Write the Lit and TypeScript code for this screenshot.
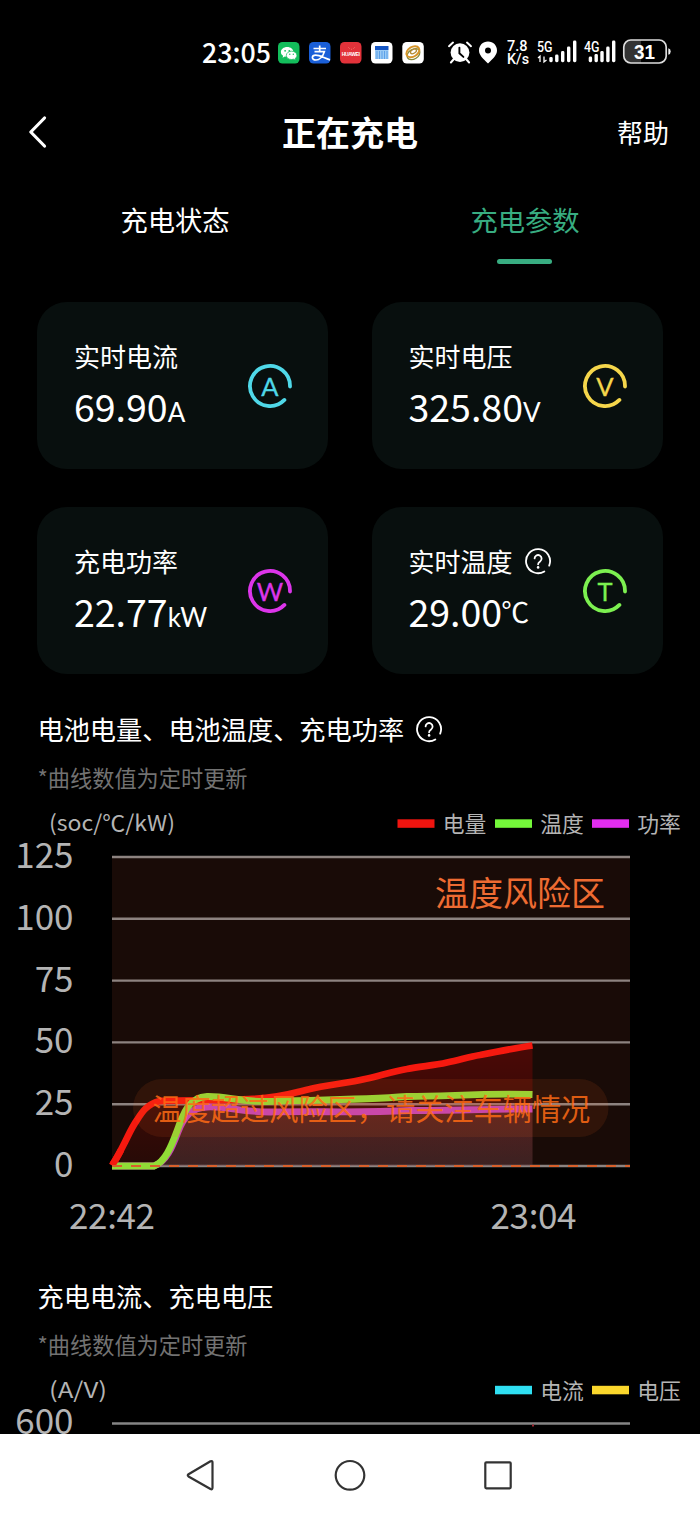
import { LitElement, html, svg, css } from "lit";
import { customElement, property } from "lit/decorators.js";

interface Legend { color: string; name: string; x: number; }

const LINES_Y = [857, 918.8, 980.6, 1042.4, 1104.2, 1166];
const TICKS = ["125", "100", "75", "50", "25", "0"];

const RED = "M113,1164 C117,1158 121,1150 125,1142 C129,1134 132,1127 137,1120 C142,1112 147,1104 160,1101 C185,1100 225,1101 253,1099 C284,1097 296,1092 310,1089 C325,1085 350,1083 365,1079 C380,1076 390,1072 407,1069 C420,1066 432,1066 447,1062.5 C460,1060 468,1057 480,1055 C500,1051 515,1048 532.5,1045.5";
const GREEN = "M112,1166 L154,1166 C165,1162 171,1147 177,1131 C183,1114 189,1097 207,1096.5 C226,1096 240,1102 267,1101.5 C310,1100 360,1100 407,1096.5 C450,1096.5 480,1093 532.5,1094.5";
const PURPLE = "M112,1166 L154,1166 C166,1162 172,1148 178,1132 C184,1116 192,1107.5 207,1107 C228,1106 240,1112 270,1112 C320,1111 360,1113 410,1110.5 C450,1110.5 490,1109 532.5,1109";

@customElement("ring-icon")
class RingIcon extends LitElement {
  @property() letter = "A";
  @property() color = "#fff";
  static styles = css`
    :host { display: block; width: 46px; height: 46px; }
    svg { display: block; }
    text { font: 400 25.500px Lato, sans-serif; text-anchor: middle; }
  `;
  render() {
    return html`<svg width="46" height="46" viewBox="0 0 46 46">
      <path d="M43 23.5A20 20 0 1 0 37.4 36.9" fill="none" stroke=${this.color} stroke-width="3.8" stroke-linecap="round"/>
      <text x="23" y="32.500" fill=${this.color} stroke=${this.color} stroke-width=".3">${this.letter}</text>
    </svg>`;
  }
}

@customElement("help-icon")
class HelpIcon extends LitElement {
  static styles = css`
    :host { display: block; width: 28px; height: 28px; }
    svg { display: block; }
  `;
  render() {
    return html`<svg width="28" height="28" viewBox="0 0 28 28" fill="none" stroke="#fff" stroke-width="1.8" stroke-linecap="round">
      <path d="M20.3 24.4A12 12 0 1 1 25.2 18.6"/>
      <path d="M10.6 11.4a3.5 3.5 0 1 1 5.5 3c-1.5 1-2 1.5-2 2.9"/>
      <circle cx="14.1" cy="20.4" r="1.3" fill="#fff" stroke="none"/>
    </svg>`;
  }
}

@customElement("status-bar")
class StatusBar extends LitElement {
  static styles = css`
    :host { display: block; height: 83px; }
    svg { display: block; }
    text { font-family: Roboto, sans-serif; fill: #fff; }
    .time { font: 500 27.500px "Noto Sans CJK SC", sans-serif; }
    .small { font-size: 14.500px; font-weight: 500; }
    .net { font-size: 14px; font-weight: 500; }
    .battery { font: 700 20px "Liberation Sans", sans-serif; }
    .brand { font: 700 5px "Liberation Sans", sans-serif; }
  `;
  render() {
    const bars = (xs: number[], tops: number[]) =>
      xs.map((x, i) => svg`<rect x=${x} y=${tops[i]} width="3.4" height=${62.2 - tops[i]} rx="1.4" fill="#fff"/>`);
    return html`<svg width="700" height="83" viewBox="0 0 700 83">
      <text class="time" x="202" y="62.5" textLength="69" lengthAdjust="spacingAndGlyphs">23:05</text>
      <rect x="278" y="42" width="21.500" height="21.500" rx="4.500" fill="#13bd5b"/>
      <path d="M287.200 47c-3.600 0-6.300 2.200-6.300 5 0 1.600.8 2.900 2.200 3.800l-.5 1.900 2.200-1.200 2.400.3c3.500 0 6.200-2.200 6.200-4.900s-2.700-4.900-6.200-4.900z" fill="#fff"/>
      <path d="M291.600 51.200c3 0 5.300 1.900 5.300 4.200 0 1.300-.7 2.400-1.800 3.200l.4 1.600-1.900-1-2 .3c-3 0-5.300-1.800-5.300-4.100s2.300-4.200 5.300-4.200z" fill="#fff" stroke="#13bd5b" stroke-width=".7"/>
      <g fill="#13bd5b"><circle cx="285.100" cy="50.800" r=".9"/><circle cx="289.300" cy="50.800" r=".9"/><circle cx="289.800" cy="54.200" r=".7"/><circle cx="293.300" cy="54.200" r=".7"/></g>
      <rect x="309" y="42" width="21.500" height="21.500" rx="4.500" fill="#1a5fd8"/>
      <path d="M313.500 48.500h12.500M319.700 45.500v6M314.500 51.700h9.800c-1.500 5-5 8.300-8.300 8.300-5 0-4.500-4.800-.3-4.800 4 0 8.300 2.800 14.300 4.700" fill="none" stroke="#fff" stroke-width="1.700"/>
      <rect x="340" y="42" width="21.500" height="21.500" rx="4.500" fill="#e2323a"/>
      <text class="brand" x="341.800" y="55.800" textLength="18">HUAWEI</text>
      <path d="M348.500 47.500l1 1M351.500 48.800v.8M354.500 47.500l-1 1" stroke="#ff9a80" stroke-width=".8"/>
      <rect x="371" y="42" width="21.500" height="21.500" rx="4.500" fill="#fff"/>
      <path d="M375 46h13.500v4H375z" fill="#1556c4"/>
      <path d="M375 50h13.500v9H375z" fill="#9bcbf5"/>
      <path d="M377 51v8M379.500 51v8M382 51v8M384.500 51v8M387 51v8" stroke="#4a95e6" stroke-width=".8"/>
      <rect x="402.300" y="42" width="21.500" height="21.500" rx="4.500" fill="#fff"/>
      <g fill="none" transform="rotate(-32 413 52.500)">
        <ellipse cx="412.500" cy="54.200" rx="7" ry="4.800" stroke="#858b3d" stroke-width="1.300"/>
        <ellipse cx="413.300" cy="51.800" rx="7" ry="4.800" stroke="#d79529" stroke-width="1.900"/>
        <ellipse cx="414" cy="51.800" rx="3.300" ry="1.900" stroke="#b28b35" stroke-width="1.300"/>
      </g>
      <g stroke="#fff" fill="none" stroke-linecap="round">
        <circle cx="460" cy="52.600" r="9.400" fill="#fff" stroke="none"/>
        <path d="M449 46.200l4-3.600M471 46.200l-4-3.600M453.500 59.500l-2.600 3M466.500 59.500l2.600 3" stroke-width="2"/>
        <path d="M459.400 47.600v5.700l4 3.600" stroke="#000" stroke-width="1.900"/>
      </g>
      <path fill-rule="evenodd" d="M488 41.500c-5.300 0-9 3.900-9 8.900 0 4.600 4 8.200 9 13 5-4.800 9-8.400 9-13 0-5-3.700-8.900-9-8.900zm0 6a3 3 0 1 1 0 6 3 3 0 0 1 0-6z" fill="#fff"/>
      <text class="small" x="507" y="50.500" textLength="20.500" lengthAdjust="spacingAndGlyphs">7.8</text>
      <text class="small" x="507" y="64" textLength="22" lengthAdjust="spacingAndGlyphs">K/s</text>
      <text class="net" x="537" y="51.500" textLength="15.500" lengthAdjust="spacingAndGlyphs">5G</text>
      <path d="M538 58l2-1.800V62M544 56.500V62l2.500-2" stroke="#fff" stroke-width="1.300" fill="none"/>
      ${bars([549.3, 555.1, 561, 567, 573], [57, 54.5, 51, 46.5, 40.5])}
      <text class="net" x="584" y="51.500" textLength="15.500" lengthAdjust="spacingAndGlyphs">4G</text>
      ${bars([588.7, 594.5, 600.3, 606.2, 612], [56.5, 54, 51, 46.5, 40.5])}
      <path d="M631 40h10v23h-10q-6.500 0-6.500-6.500v-10Q624.500 40 631 40z" fill="#333"/>
      <rect x="623.800" y="40" width="42.400" height="23" rx="7" fill="none" stroke="#ddd" stroke-width="1.700"/>
      <path d="M668.300 48.300q2.400.6 2.400 3.200t-2.400 3.200z" fill="#eee"/>
      <text class="battery" x="634" y="58.700" textLength="21" lengthAdjust="spacingAndGlyphs">31</text>
    </svg>`;
  }
}

@customElement("metric-card")
class MetricCard extends LitElement {
  @property() label = "";
  @property() value = "";
  @property() unit = "";
  @property() letter = "";
  @property() color = "";
  @property({ type: Boolean }) help = false;
  static styles = css`
    :host { display: flex; box-sizing: border-box; height: 167px; border-radius: 30px; background: #080f0e; padding: 0 35px 0 37px; justify-content: space-between; color: #fff; }
    .info { padding-top: 35px; }
    .label { display: flex; align-items: center; gap: 11px; height: 38px; font-size: 26px; line-height: 38px; white-space: nowrap; }
    .value { display: flex; align-items: baseline; height: 54px; line-height: 54px; margin-top: 4px; white-space: nowrap; }
    .number { font-size: 37.500px; }
    .unit { font: 400 26px/54px Lato, sans-serif; }
    .degree { font-family: "Noto Sans CJK SC", sans-serif; font-size: 28px; margin-left: -1px; position: relative; top: -4px; }
    ring-icon { margin-top: 61px; flex: none; }
  `;
  render() {
    return html`<div class="info">
        <div class="label"><span>${this.label}</span>${this.help ? html`<help-icon></help-icon>` : ""}</div>
        <div class="value"><span class="number">${this.value}</span><span class="unit ${this.unit === "℃" ? "degree" : ""}">${this.unit}</span></div>
      </div>
      <ring-icon .letter=${this.letter} .color=${this.color}></ring-icon>`;
  }
}

const legendItems = (items: Legend[], y: number) => items.map(l => svg`
  <rect x=${l.x} y=${y - 4.7} width="37" height="8.500" fill=${l.color}/>
  <text class="legend" x=${l.x + 45.3} y=${y + 8}>${l.name}</text>`);

const chartStyles = css`
  :host { display: block; }
  svg { display: block; }
  text { font-family: "Noto Sans CJK SC", sans-serif; fill: #b4b4b4; }
  .legend { font-size: 21.8px; }
  .unit { font-size: 22px; }
  .tick { font-size: 35px; text-anchor: end; }
  .time { font-size: 35px; }
  .risk { font-size: 34px; fill: #ee6b32; }
  .warn { font-size: 29.200px; fill: #ff6a14; fill-opacity: .85; }
`;

@customElement("power-chart")
class PowerChart extends LitElement {
  static styles = chartStyles;
  render() {
    const legend = [
      { color: "#f0140f", name: "电量", x: 397.5 },
      { color: "#74f83a", name: "温度", x: 495 },
      { color: "#e22df0", name: "功率", x: 592 },
    ];
    return html`<svg width="700" height="450" viewBox="0 800 700 450">
      <defs>
        <linearGradient id="red" x1="0" y1="0" x2="0" y2="1"><stop offset="0" stop-color="#ff0000" stop-opacity=".22"/><stop offset="1" stop-color="#ff0000" stop-opacity=".06"/></linearGradient>
        <linearGradient id="violet" x1="0" y1="0" x2="0" y2="1"><stop offset="0" stop-color="#90484a" stop-opacity=".36"/><stop offset="1" stop-color="#604a50" stop-opacity=".36"/></linearGradient>
      </defs>
      <text class="unit" x="49" y="831" textLength="126" lengthAdjust="spacingAndGlyphs">(soc/℃/kW)</text>
      ${legendItems(legend, 824)}
      <rect x="112" y="857" width="518" height="310" fill="#190b07"/>
      ${LINES_Y.map(y => svg`<line x1="112" x2="630" y1=${y} y2=${y} stroke="#8d8380" stroke-width="2.400"/>`)}
      ${TICKS.map((t, i) => svg`<text class="tick" x="73.500" y=${LINES_Y[i] + 11}>${t}</text>`)}
      <path d="${RED} V1166 H112Z" fill="url(#red)"/>
      <path d="${PURPLE} V1166Z" fill="url(#violet)"/>
      <g fill="none" stroke-width="6.800">
        <path d=${RED} stroke="#f5190f"/>
        <path d=${PURPLE} stroke="#c445b8"/>
        <path d=${GREEN} stroke="#91dc36"/>
        <path d="M112 1165.500C116 1159 119 1154 121 1150" stroke="#f5190f"/>
      </g>
      <path d="M112 1166H630" stroke="#d8602b" stroke-width="1.800" stroke-dasharray="10 9"/>
      <rect x="133" y="1079" width="475.500" height="58" rx="29" fill="#ff7020" fill-opacity=".1"/>
      <text class="risk" x="435" y="905.500">温度风险区</text>
      <text class="warn" x="152.500" y="1119.500">温度超过风险区，请关注车辆情况</text>
      <text class="time" x="69" y="1228.500" textLength="86">22:42</text>
      <text class="time" x="490.500" y="1228.500" textLength="86">23:04</text>
    </svg>`;
  }
}

@customElement("current-chart")
class CurrentChart extends LitElement {
  static styles = chartStyles;
  render() {
    const legend = [
      { color: "#2fdff2", name: "电流", x: 495 },
      { color: "#fbd72c", name: "电压", x: 592 },
    ];
    return html`<svg width="700" height="70" viewBox="0 1366 700 70">
      <text class="unit" x="49" y="1397.500" textLength="58" lengthAdjust="spacingAndGlyphs">(A/V)</text>
      ${legendItems(legend, 1390.5)}
      <text class="tick" x="73.500" y="1434">600</text>
      <line x1="112" x2="630" y1="1423.500" y2="1423.500" stroke="#858585" stroke-width="2.400"/>
      <rect x="532" y="1424.500" width="2" height="2" fill="#a02530"/>
    </svg>`;
  }
}

@customElement("app-root")
class AppRoot extends LitElement {
  static styles = css`
    :host { display: flex; flex-direction: column; width: 700px; height: 1516px; overflow: hidden; background: #000; color: #fff; font-family: "Noto Sans CJK SC", sans-serif; }
    .screen { height: 1434px; overflow: hidden; flex: none; }
    .header { display: grid; grid-template-columns: 1fr auto 1fr; align-items: center; height: 98px; padding: 0 31px 0 27px; box-sizing: border-box; }
    .back { margin-left: -1px; }
    .title { font-size: 34px; font-weight: 700; line-height: 50px; padding-left: 4px; }
    .help { justify-self: end; font-size: 26px; line-height: 40px; }
    .tabs { display: grid; grid-template-columns: 1fr 1fr; height: 121px; }
    .tab { display: flex; flex-direction: column; align-items: center; padding-top: 18px; font-size: 27.300px; line-height: 40px; }
    .active { color: #38ad81; }
    .bar { width: 55px; height: 5px; border-radius: 3px; background: #38ad81; margin: 20px 2px 0 0; }
    .cards { display: grid; grid-template-columns: 291px 291px; grid-auto-rows: 167px; gap: 38px 43.500px; padding: 0 37px; height: 372px; box-sizing: border-box; }
    .section { display: flex; align-items: center; gap: 11px; height: 40px; padding-left: 37.500px; font-size: 26.200px; }
    .first { margin-top: 35px; }
    .second { margin-top: 26px; }
    .note { height: 30px; margin-top: 13px; padding-left: 37.500px; font-size: 22.200px; line-height: 30px; color: #727272; }
    power-chart { margin-top: 8px; }
    current-chart { margin-top: 7px; }
    .nav { height: 82px; flex: none; background: #fff; }
    svg { display: block; }
  `;
  render() {
    return html`
      <div class="screen">
        <status-bar></status-bar>
        <div class="header">
          <svg class="back" width="24" height="34" viewBox="0 0 24 34"><path d="M18.500 3L4.800 17l13.700 14" fill="none" stroke="#fff" stroke-width="3.200" stroke-linecap="round" stroke-linejoin="round"/></svg>
          <div class="title">正在充电</div>
          <div class="help">帮助</div>
        </div>
        <div class="tabs">
          <div class="tab">充电状态</div>
          <div class="tab active">充电参数<div class="bar"></div></div>
        </div>
        <div class="cards">
          <metric-card label="实时电流" value="69.90" unit="A" letter="A" color="#4fd8e8"></metric-card>
          <metric-card label="实时电压" value="325.80" unit="V" letter="V" color="#f5d64b"></metric-card>
          <metric-card label="充电功率" value="22.77" unit="kW" letter="W" color="#dc35ea"></metric-card>
          <metric-card label="实时温度" value="29.00" unit="℃" letter="T" color="#7cf050" help></metric-card>
        </div>
        <div class="section first">电池电量、电池温度、充电功率<help-icon></help-icon></div>
        <div class="note">*曲线数值为定时更新</div>
        <power-chart></power-chart>
        <div class="section second">充电电流、充电电压</div>
        <div class="note">*曲线数值为定时更新</div>
        <current-chart></current-chart>
      </div>
      <div class="nav">
        <svg width="700" height="82" viewBox="0 1434 700 82" fill="none" stroke="#333" stroke-width="2.200" stroke-linejoin="round">
          <path d="M188.500 1474.200L210.500 1461.300Q212.500 1460.500 212.500 1462.500V1487.500Q212.500 1490 210.500 1489L188.500 1476.500Q187 1475.300 188.500 1474.200Z"/>
          <circle cx="350" cy="1475.300" r="14.300"/>
          <rect x="485.300" y="1462.300" width="25.400" height="26" rx="1"/>
        </svg>
      </div>`;
  }
}
